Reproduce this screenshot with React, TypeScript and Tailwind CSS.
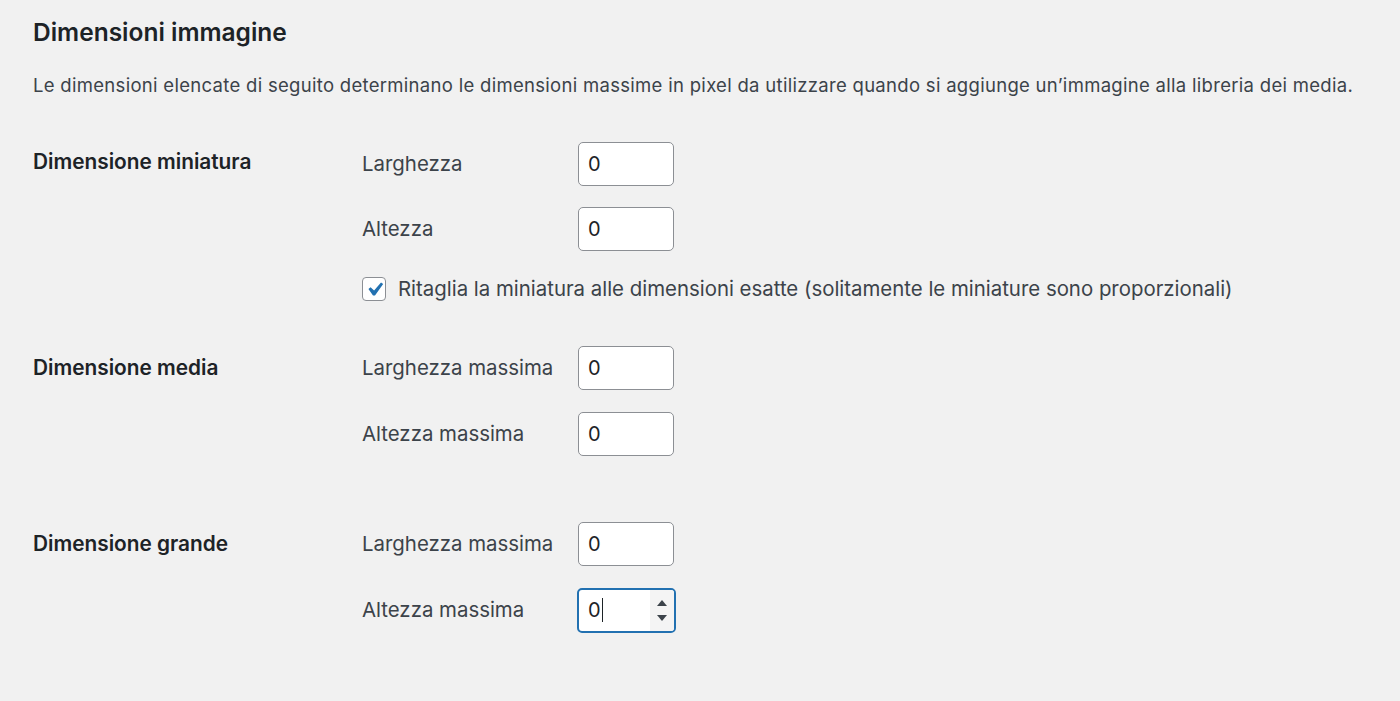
import React from 'react';

const font = { fontFamily: 'Inter, "Noto Sans", sans-serif' };

const NumberBox: React.FC<{ value: string; focused?: boolean }> = ({ value, focused }) => {
  if (focused) {
    return (
      <div className="flex h-[45px] w-[99px] items-stretch rounded-[5px] border-2 border-[#2271b1] bg-white -ml-[1px]">
        <div className="flex flex-1 items-center pl-[9px] text-[20px] text-[#1d2327]">
          {value}
          <span className="ml-[1px] inline-block h-[24px] w-[1.5px] bg-[#1d2327]" />
        </div>
        <div className="flex w-[24px] flex-col items-center justify-center gap-[9px] bg-[#f4f4f4] rounded-r-[3px]">
          <svg width="10" height="6" viewBox="0 0 10 6"><path d="M0 6 L5 0 L10 6 Z" fill="#3c434a" /></svg>
          <svg width="10" height="6" viewBox="0 0 10 6"><path d="M0 0 L5 6 L10 0 Z" fill="#3c434a" /></svg>
        </div>
      </div>
    );
  }
  return (
    <div className="flex h-[44px] w-[96px] items-center rounded-[5px] border border-[#8c8f94] bg-white pl-[9px] text-[20px] text-[#1d2327]">
      {value}
    </div>
  );
};

const Field: React.FC<{ label: string; focused?: boolean; className?: string }> = ({ label, focused, className }) => (
  <div className={`flex h-[44px] items-center ${className ?? ''}`}>
    <span className="w-[216px] text-[20.4px] text-[#3c434a]">{label}</span>
    <NumberBox value="0" focused={focused} />
  </div>
);

const App: React.FC = () => {
  return (
    <div className="min-h-screen bg-[#f1f1f1] pl-[33px] pt-[17px]" style={font}>
      <h2 className="text-[24.5px] font-semibold leading-[30px] text-[#1d2327]">Dimensioni immagine</h2>
      <p className="mt-[25px] text-[18.5px] leading-[26px] tracking-[0.3px] text-[#3c434a]">
        Le dimensioni elencate di seguito determinano le dimensioni massime in pixel da utilizzare quando si aggiunge un’immagine alla libreria dei media.
      </p>

      <div className="mt-[44px] grid grid-cols-[329px_1fr]">
        <div className="pt-[6px] text-[20.8px] font-semibold leading-[28px] text-[#1d2327]">Dimensione miniatura</div>
        <div className="flex flex-col">
          <Field label="Larghezza" />
          <Field label="Altezza" className="mt-[21px]" />
          <label className="mt-[26px] flex h-[24px] items-center">
            <span className="flex h-[24px] w-[24px] items-center justify-center rounded-[4px] border border-[#8c8f94] bg-white">
              <svg width="27" height="27" viewBox="0 0 20 20" className="shrink-0">
                <path d="M14.83 4.89l1.6 1.1-6.07 8.5H8.9L5.5 9.7l1.6-1.45 2.6 2.4z" fill="#2271b1" />
              </svg>
            </span>
            <span className="ml-[12px] text-[20.4px] text-[#3c434a]">
              Ritaglia la miniatura alle dimensioni esatte (solitamente le miniature sono proporzionali)
            </span>
          </label>
        </div>
      </div>

      <div className="mt-[45px] grid grid-cols-[329px_1fr]">
        <div className="pt-[8px] text-[20.8px] font-semibold leading-[28px] text-[#1d2327]">Dimensione media</div>
        <div className="flex flex-col">
          <Field label="Larghezza massima" />
          <Field label="Altezza massima" className="mt-[22px]" />
        </div>
      </div>

      <div className="mt-[66px] grid grid-cols-[329px_1fr]">
        <div className="pt-[8px] text-[20.8px] font-semibold leading-[28px] text-[#1d2327]">Dimensione grande</div>
        <div className="flex flex-col">
          <Field label="Larghezza massima" />
          <Field label="Altezza massima" focused className="mt-[22px]" />
        </div>
      </div>
    </div>
  );
};

export default App;
